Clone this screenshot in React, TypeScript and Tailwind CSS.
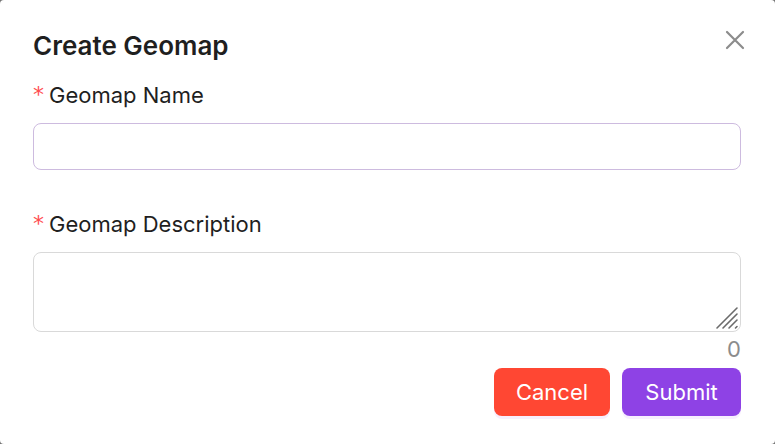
import { useState } from "react";

function Label({ htmlFor, children }: { htmlFor: string; children: string }) {
  return (
    <label htmlFor={htmlFor} className="flex items-center gap-1.5 text-[22px] leading-7 text-[#1f1f1f]">
      <span aria-hidden="true" className="h-7 w-2.5 pt-0.5 text-[22px] leading-6 text-[#ff4d4f] font-['DejaVu_Sans',sans-serif]">
        *
      </span>
      {children}
    </label>
  );
}

export default function App() {
  const [name, setName] = useState("");
  const [description, setDescription] = useState("");

  return (
    <main className="min-h-screen bg-[#737373] font-['Inter','Liberation_Sans',sans-serif]">
      <form
        role="dialog"
        aria-labelledby="dialog-title"
        onSubmit={(event) => event.preventDefault()}
        className="flex min-h-screen flex-col rounded-[4px] bg-white pt-6 pr-[34px] pb-7 pl-[33px]"
      >
        <header className="flex items-start justify-between">
          <h1 id="dialog-title" className="pt-1.5 text-[26px] leading-8 font-semibold text-[#1f1f1f]">
            Create Geomap
          </h1>
          <button type="button" aria-label="Close" className="-mr-2.5 flex size-8 items-center justify-center text-[#8c8c8c]">
            <svg viewBox="0 0 20 20" className="size-5" fill="none" stroke="currentColor" strokeWidth="2.2" strokeLinecap="round">
              <path d="M2 2l16 16M18 2L2 18" />
            </svg>
          </button>
        </header>

        <div className="flex flex-col gap-3.5 pt-[19px]">
          <Label htmlFor="geomap-name">Geomap Name</Label>
          <input
            id="geomap-name"
            type="text"
            required
            value={name}
            onChange={(event) => setName(event.target.value)}
            className="h-[47px] w-full rounded-lg border border-[#cdbbdf] px-4 text-[22px] shadow-none outline-none"
          />
        </div>

        <div className="flex flex-col gap-3.5 pt-10">
          <Label htmlFor="geomap-description">Geomap Description</Label>
          <div className="relative h-20">
            <textarea
              id="geomap-description"
              required
              value={description}
              onChange={(event) => setDescription(event.target.value)}
              className="block h-20 w-full resize-none rounded-lg border border-[#d9d9d9] px-4 py-2 text-[22px] outline-none"
            />
            <svg
              aria-hidden="true"
              viewBox="0 0 24 24"
              className="pointer-events-none absolute right-0.5 bottom-0.5 size-6"
              fill="none"
              stroke="#6b6b6b"
              strokeWidth="1.6"
              strokeLinecap="round"
            >
              <path d="M2 22L22 2M8 22L22 8M14 22L22 14M20.500 22L22 20.500" />
            </svg>
          </div>
        </div>

        <output htmlFor="geomap-description" className="pt-[3px] text-right text-[22px] leading-7 text-[#8c8c8c]">
          {description.length}
        </output>

        <footer className="flex justify-end gap-3 pt-[5px]">
          <button type="button" className="h-12 w-[116px] rounded-lg bg-[#ff4733] text-[22px] text-white shadow-[0_3px_0_#f7effe]">
            Cancel
          </button>
          <button type="submit" className="h-12 w-[119px] rounded-lg bg-[#8e42e5] text-[22px] text-white shadow-[0_3px_0_#f7effe]">
            Submit
          </button>
        </footer>
      </form>
    </main>
  );
}
